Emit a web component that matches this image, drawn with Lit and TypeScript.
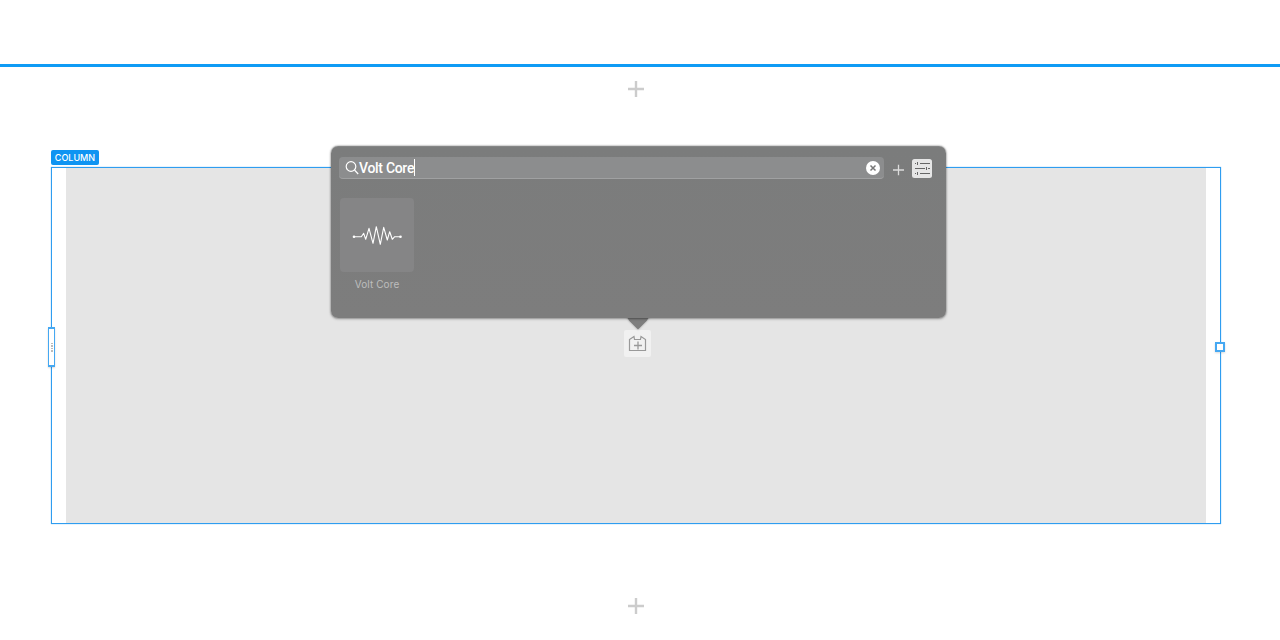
import { LitElement, html, css, svg } from "lit";
import { customElement } from "lit/decorators.js";

const plus = svg`<svg class="plus" width="16" height="16" viewBox="0 0 16 16"><path d="M8 0v16M0 8h16" stroke="#cccccc" stroke-width="2.400" fill="none"/></svg>`;

@customElement("app-root")
export class AppRoot extends LitElement {
  static styles = css`
    :host { display: block; width: 1280px; height: 640px; background: #fff; overflow: hidden; font-family: Inter, "Liberation Sans", sans-serif; }
    .page { height: 640px; padding-top: 64px; box-sizing: border-box; display: flex; flex-direction: column; align-items: stretch; }
    .rule { height: 3px; background: #0f9bf5; flex: none; }
    .adder { height: 16px; margin-top: 14px; display: flex; justify-content: center; padding-right: 8px; flex: none; }
    .plus { display: block; }
    .column { position: relative; margin: 70px 59px 0 51px; height: 357px; box-sizing: border-box; border: 1px solid #2f9df0; padding: 0 14px; flex: none; box-shadow: 0 0 1px rgba(47,157,240,.7); }
    .fill { height: 100%; background: #e5e5e5; }
    .bottom { margin-top: 74px; }
    .tag { position: absolute; left: 0; top: -18px; margin-left: -1px; height: 15px; width: 48px; background: #0f94f2; border-radius: 2px; color: #fff; font-size: 9px; font-weight: 500; letter-spacing: 0; display: flex; align-items: center; justify-content: center; }
    .grip { position: absolute; left: -4px; top: 159px; width: 7px; height: 40px; box-sizing: border-box; border: 2px solid #45a8f2; border-width: 2px 1.5px; background: #fff; display: flex; flex-direction: column; align-items: center; justify-content: center; gap: 1px; box-shadow: 0 1px 2px rgba(0,0,0,.15); }
    .grip i { width: 2px; height: 1.5px; background: #bbb; display: block; }
    .knob { position: absolute; right: -5px; top: 174px; width: 6px; height: 6px; border: 2px solid #45a8f2; background: #fff; box-shadow: 0 1px 2px rgba(0,0,0,.15); }
    .pop { position: absolute; left: 279px; top: -22px; width: 615px; height: 172px; box-sizing: border-box; background: linear-gradient(#7b7c7c, #7d7d7d); border-radius: 7px; box-shadow: 0 0 2px rgba(0,0,0,.5), 0 1px 3px rgba(0,0,0,.25), inset 0 1px 0 rgba(255,255,255,.08); padding: 11px 14px 0 8px; }
    .arrow { position: absolute; left: 572px; top: 149px; width: 28px; height: 14px; display: block; filter: drop-shadow(0 0 1px rgba(0,0,0,.35)); }
    .bar { display: flex; align-items: center; height: 22px; }
    .search { flex: 1; height: 22px; box-sizing: border-box; background: #8c8d8e; border-radius: 4px; border-bottom: 1px solid #a0a1a2; display: flex; align-items: center; padding: 0 4px 0 6px; color: #fff; font-family: Roboto, "Liberation Sans", sans-serif; font-size: 14px; letter-spacing: -0.300px; font-weight: 500; }
    .search svg { flex: none; margin-right: 0; }
    .text { flex: none; line-height: 20px; padding-top: 1px; }
    .caret { width: 1px; height: 17px; background: #fff; flex: none; }
    .sp { flex: 1; }
    .add { margin: 0 8px 0 9px; display: block; flex: none; transform: translateY(1.500px); }
    .filter { display: block; flex: none; }
    .tile { margin: 19px 0 0 1px; width: 74px; height: 74px; background: #858586; border-radius: 4px; display: flex; align-items: center; justify-content: center; }
    .name { width: 74px; margin: 6px 0 0 1px; text-align: center; color: #bdbdbd; font-size: 10px; letter-spacing: 0.100px; line-height: 13px; }
    .block { position: absolute; left: 572px; top: 162px; width: 27px; height: 27px; background: #f1f1f1; border-radius: 2px; display: flex; align-items: center; justify-content: center; }
  `;

  render() {
    return html`<div class="page">
      <div class="rule"></div>
      <div class="adder">${plus}</div>
      <div class="column">
        <div class="fill"></div>
        <div class="tag">COLUMN</div>
        <div class="grip"><i></i><i></i><i></i><i></i></div>
        <div class="knob"></div>
        <div class="block">
          <svg width="19" height="17" viewBox="0 0 19 17" fill="none" stroke="#999" stroke-width="1.200"><path d="M1.500 4.500l4.500-3 .500 3h6l.500-3 4.500 3v11h-16z"/><path d="M10 6.500v8M6 10.500h8" stroke-width="1.300"/></svg>
        </div>
        <svg class="arrow" viewBox="0 0 28 14"><path d="M0 0H1C3 0 4 1 5 3.500L14 12.500 23 3.500C24 1 25 0 27 0H28z" fill="#7d7d7d"/></svg>
        <div class="pop">
          <div class="bar">
            <div class="search">
              <svg width="14" height="15" viewBox="0 0 14 15" fill="none" stroke="#fff" stroke-width="1.200"><circle cx="6" cy="6.500" r="4.800"/><path d="M9.500 10l3.700 4"/></svg>
              <span class="text">Volt Core</span><span class="caret"></span>
              <span class="sp"></span>
              <svg width="14" height="14" viewBox="0 0 14 14"><circle cx="7" cy="7" r="7" fill="#fff"/><path d="M4.500 4.500l5 5M9.500 4.500l-5 5" stroke="#777" stroke-width="1.500"/></svg>
            </div>
            <svg class="add" width="11" height="11" viewBox="0 0 11 11"><path d="M5.500 0v11M0 5.500h11" stroke="#dcdcdc" stroke-width="1.300"/></svg>
            <svg class="filter" width="20" height="19" viewBox="0 0 20 19"><rect width="20" height="19" rx="2.500" fill="#e6e6e6"/><path d="M3 4.500h1M8 4.500h10M3 9.500h10M16 9.500h2M3 14.500h1M8 14.500h10" stroke="#666" stroke-width="1"/><path d="M5.500 3v3M14.500 8v3M5.500 13v3" stroke="#666" stroke-width="1"/></svg>
          </div>
          <div class="tile">
            <svg width="50" height="22" viewBox="0 0 50 22" fill="none" stroke="#fff" stroke-width="1.100" stroke-linejoin="round"><path d="M1.300 12.700H9.300L11.700 9.300 13.700 15.300 17 4.300 21 19.300 24.300 2.700 28.300 20.300 31.700 3.300 35.300 16 37.700 7.700 40.300 15.300 42.700 12.700H49"/><circle cx="2" cy="12.700" r="1.300" fill="#fff" stroke="none"/><circle cx="48.500" cy="12.700" r="1.300" fill="#fff" stroke="none"/></svg>
          </div>
          <div class="name">Volt Core</div>
        </div>
      </div>
      <div class="adder bottom">${plus}</div>
    </div>`;
  }
}
